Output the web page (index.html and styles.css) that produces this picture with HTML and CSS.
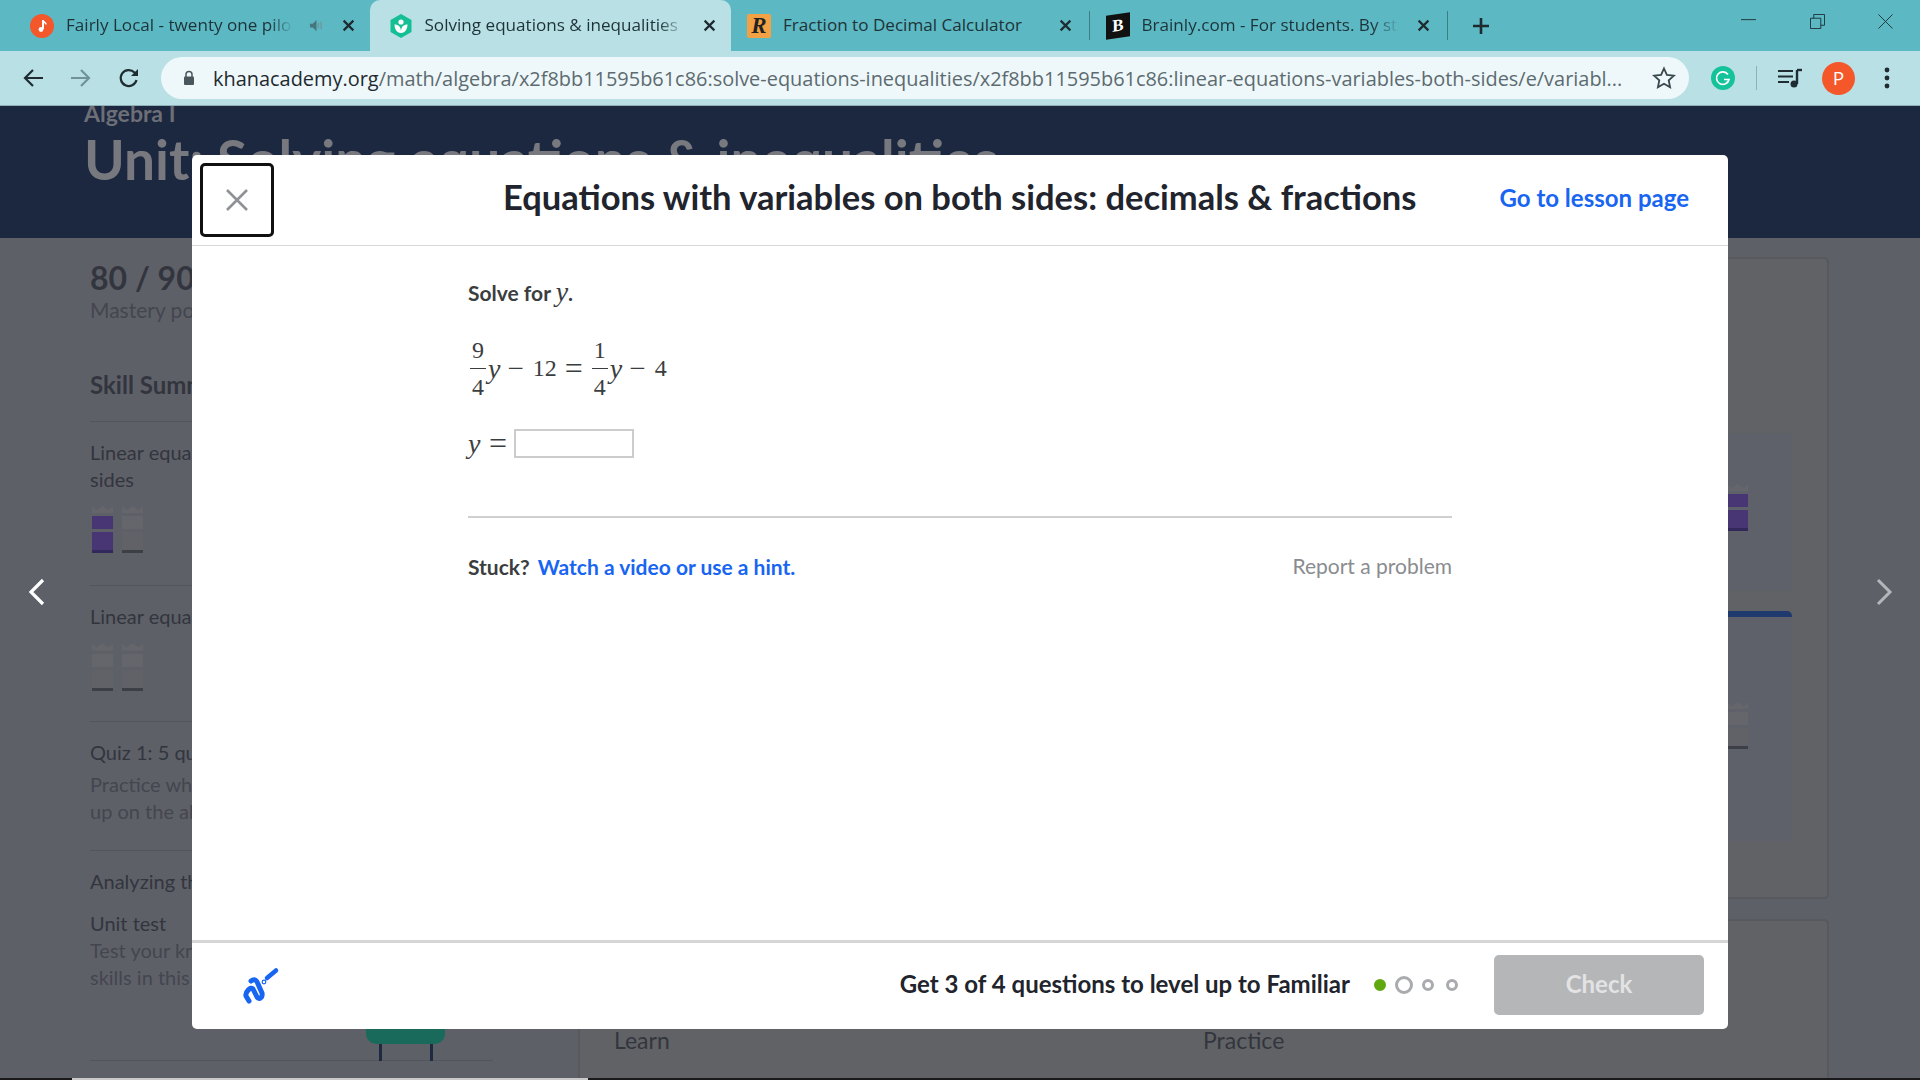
FILE: index.html
```html
<!DOCTYPE html>
<html lang="en">
<head>
    <meta charset="UTF-8">
    <title>Solving equations &amp; inequalities</title>
    <link rel="stylesheet" href="styles.css">
</head>
<body>
    <!-- browser tabs -->
    <div class="tabstrip">
        <div class="tab">
            <svg class="favicon" viewBox="0 0 24 24"><circle cx="12" cy="12" r="12" fill="#f4572a"/><path d="M13 6v9" stroke="#fff" stroke-width="2"/><path d="M13 6.5c1 2 3 2 3 4" stroke="#fff" stroke-width="1.6" fill="none"/><circle cx="11" cy="15.5" r="2.4" fill="#fff"/></svg>
            <span class="tab-title">Fairly Local - twenty one pilots</span>
            <svg class="speaker" viewBox="0 0 16 16"><path d="M1 6h3l4-4v12l-4-4H1z" fill="#48767d"/><path d="M10 5v6M13 4v8" stroke="#6b9aa1" stroke-width="1.6"/></svg>
            <svg class="tab-x" viewBox="0 0 12 12"><path d="M1.5 1.5l9 9M10.5 1.5l-9 9" stroke="#1e2a30" stroke-width="2"/></svg>
        </div>
        <div class="tab tab-active">
            <svg class="favicon" viewBox="0 0 24 24"><path d="M12 0l10.5 6v12L12 24 1.500 18V6z" fill="#14bf96"/><circle cx="12" cy="8" r="2.600" fill="#fff"/><path d="M5.500 10.500c4 0 6.500 2.500 6.500 7 0-4.500 2.500-7 6.500-7 0 5-3 8.500-6.500 8.500s-6.500-3.500-6.500-8.500z" fill="#fff"/></svg>
            <span class="tab-title">Solving equations &amp; inequalities</span>
            <svg class="tab-x" viewBox="0 0 12 12"><path d="M1.5 1.5l9 9M10.5 1.5l-9 9" stroke="#1e2a30" stroke-width="2"/></svg>
        </div>
        <div class="tab tab-sep">
            <span class="favicon favicon-r">R</span>
            <span class="tab-title tab-title-full">Fraction to Decimal Calculator</span>
            <svg class="tab-x" viewBox="0 0 12 12"><path d="M1.5 1.5l9 9M10.5 1.5l-9 9" stroke="#1e2a30" stroke-width="2"/></svg>
        </div>
        <div class="tab tab-sep">
            <span class="favicon favicon-b">B</span>
            <span class="tab-title">Brainly.com - For students. By stu</span>
            <svg class="tab-x" viewBox="0 0 12 12"><path d="M1.5 1.5l9 9M10.5 1.5l-9 9" stroke="#1e2a30" stroke-width="2"/></svg>
        </div>
        <svg class="new-tab" viewBox="0 0 18 18"><path d="M9 1v16M1 9h16" stroke="#1e2a30" stroke-width="2.600"/></svg>
        <div class="window-btns">
            <svg viewBox="0 0 16 16"><path d="M0 6h16" stroke="#1e3338" stroke-width="1"/></svg>
            <svg viewBox="0 0 16 16"><path d="M.5 4.500h11v11H.5zM4 4.500V.5h11.500V12h-4" fill="none" stroke="#1e3338" stroke-width="1"/></svg>
            <svg viewBox="0 0 16 16"><path d="M.5.5l15 15M15.500.5l-15 15" stroke="#1e3338" stroke-width="1"/></svg>
        </div>
    </div>

    <!-- address bar -->
    <div class="toolbar">
        <svg class="nav-icon" viewBox="0 0 22 22"><path d="M21 11H3M11 3l-8 8 8 8" fill="none" stroke="#1f2d33" stroke-width="2.200"/></svg>
        <svg class="nav-icon" viewBox="0 0 22 22"><path d="M1 11h18M11 3l8 8-8 8" fill="none" stroke="#71929a" stroke-width="2.200"/></svg>
        <svg class="nav-icon" viewBox="0 0 22 22"><path d="M18.500 13a8 8 0 1 1-2-7.500L19 8" fill="none" stroke="#1f2d33" stroke-width="2.200"/><path d="M20 2v7h-7z" fill="#1f2d33"/></svg>
        <div class="omnibox">
            <svg class="lock" viewBox="0 0 12 16"><path d="M3 7V4.500a3 3 0 0 1 6 0V7" fill="none" stroke="#49575c" stroke-width="1.500"/><rect x="1" y="6.500" width="10" height="8.500" rx="1" fill="#49575c"/></svg>
            <span class="url"><b>khanacademy.org</b>/math/algebra/x2f8bb11595b61c86:solve-equations-inequalities/x2f8bb11595b61c86:linear-equations-variables-both-sides/e/variabl...</span>
            <svg class="star" viewBox="0 0 24 24"><path d="M12 2.500l2.900 6.400 7 .8-5.200 4.700 1.400 6.900-6.100-3.500-6.100 3.500 1.400-6.900-5.200-4.700 7-.8z" fill="none" stroke="#37474d" stroke-width="1.800"/></svg>
        </div>
        <svg class="grammarly" viewBox="0 0 24 24"><circle cx="12" cy="12" r="12" fill="#15c39a"/><path d="M17 8.500a6.300 6.300 0 1 0 1 5h-5" fill="none" stroke="#fff" stroke-width="1.700"/></svg>
        <span class="toolbar-sep"></span>
        <svg class="media" viewBox="0 0 24 20"><path d="M0 3h15M0 8.500h15M0 14h11" stroke="#1f2d33" stroke-width="2"/><path d="M19 2v14" stroke="#1f2d33" stroke-width="2.400"/><path d="M19 2h5" stroke="#1f2d33" stroke-width="2.400"/><circle cx="16" cy="16" r="3.500" fill="#1f2d33"/></svg>
        <span class="avatar">P</span>
        <svg class="menu" viewBox="0 0 6 22"><circle cx="3" cy="3" r="2.400" fill="#1f2d33"/><circle cx="3" cy="11" r="2.400" fill="#1f2d33"/><circle cx="3" cy="19" r="2.400" fill="#1f2d33"/></svg>
    </div>

    <div class="page">
        <!-- dimmed course page behind the dialog -->
        <header class="hero">
            <p class="hero-course">Algebra I</p>
            <h1 class="hero-unit">Unit: Solving equations &amp; inequalities</h1>
        </header>
        <div class="course">
            <aside class="sidebar">
                <p class="points">80 / 900</p>
                <p class="points-label">Mastery points</p>
                <h2 class="summary-title">Skill Summary</h2>
                <div class="skill skill-first">
                    <p>Linear equations with variables on both sides</p>
                    <div class="towers">
                        <div class="tower tower-done"><i class="crown"></i><i class="block"></i><i class="block block-base"></i></div>
                        <div class="tower"><i class="crown"></i><i class="block"></i><i class="block block-base"></i></div>
                    </div>
                </div>
                <div class="skill">
                    <p>Linear equations with parentheses</p>
                    <div class="towers">
                        <div class="tower"><i class="crown"></i><i class="block"></i><i class="block block-base"></i></div>
                        <div class="tower"><i class="crown"></i><i class="block"></i><i class="block block-base"></i></div>
                    </div>
                </div>
                <div class="skill skill-quiz">
                    <p>Quiz 1: 5 questions</p>
                    <p class="muted">Practice what you've learned, and level up on the above skills</p>
                </div>
                <div class="skill skill-clip">
                    <p>Analyzing the number of solutions</p>
                </div>
                <div class="skill-test">
                    <p>Unit test</p>
                    <p class="muted">Test your knowledge of all skills in this unit</p>
                    <div class="chair"><i class="chair-seat"></i><i class="chair-legs"></i></div>
                </div>
            </aside>
            <main class="lessons">
                <section class="card card-main">
                    <div class="panel panel-one">
                        <div class="tower tower-done"><i class="crown"></i><i class="block"></i><i class="block block-base"></i></div>
                    </div>
                    <div class="panel panel-two">
                        <div class="tower"><i class="crown"></i><i class="block"></i><i class="block block-base"></i></div>
                    </div>
                </section>
                <section class="card card-next">
                    <span>Learn</span>
                    <span>Practice</span>
                </section>
            </main>
        </div>
        <svg class="pager pager-prev" viewBox="0 0 18 28"><path d="M15 2L3 14l12 12" fill="none" stroke="#fff" stroke-width="3.200"/></svg>
        <svg class="pager pager-next" viewBox="0 0 18 28"><path d="M3 2l12 12L3 26" fill="none" stroke="#b5b6ba" stroke-width="3"/></svg>

        <!-- exercise dialog -->
        <div class="modal">
            <div class="modal-head">
                <button class="close-btn"><svg viewBox="0 0 24 24"><path d="M2 2l20 20M22 2L2 22" stroke="#8f9196" stroke-width="2.600"/></svg></button>
                <h2 class="modal-title">Equations with variables on both sides: decimals &amp; fractions</h2>
                <a class="lesson-link">Go to lesson page</a>
            </div>
            <div class="modal-body">
                <div class="exercise">
                    <p class="prompt">Solve for <i class="var">y</i>.</p>
                    <div class="equation">
                        <span class="frac"><span>9</span><span class="frac-den">4</span></span>
                        <i class="var">y</i><span class="op op-minus">&minus;</span><span>12</span><span class="op op-eq">=</span>
                        <span class="frac"><span>1</span><span class="frac-den">4</span></span>
                        <i class="var">y</i><span class="op op-minus">&minus;</span><span>4</span>
                    </div>
                    <div class="answer">
                        <i class="var">y</i><span class="op">=</span><input class="answer-box" type="text">
                    </div>
                    <div class="help">
                        <p>Stuck? <a>Watch a video or use a hint.</a></p>
                        <a class="report">Report a problem</a>
                    </div>
                </div>
            </div>
            <div class="modal-foot">
                <svg class="scratch" viewBox="0 0 40 40"><path d="M9 16c4-3 6 0 7 3l4 9c1 5-3 7-5 4l-4-8c-2-3-8 3-7 7l3 5" fill="none" stroke="#1865f2" stroke-width="5" stroke-linecap="round" stroke-linejoin="round"/><path d="M25 13l9-7.500" stroke="#1865f2" stroke-width="4.500" stroke-linecap="round"/><circle cx="22" cy="17" r="1.800" fill="#fff" stroke="#1865f2" stroke-width="1.200"/></svg>
                <p class="level-text">Get 3 of 4 questions to level up to Familiar</p>
                <div class="dots">
                    <i class="dot dot-correct"></i>
                    <i class="dot dot-current"></i>
                    <i class="dot"></i>
                    <i class="dot"></i>
                </div>
                <button class="check-btn">Check</button>
            </div>
        </div>
    </div>

    <div class="taskbar"><i class="taskbar-lit"></i></div>
</body>
</html>
```

FILE: styles.css
```css
:root{
    --tab-bg: #5cb8c3;
    --toolbar-bg: #b8e0e5;
    --omni-bg: #eef8fa;
    --dim-bg: #5e6068;
    --dim-text: #33353e;
    --dim-muted: #44464f;
    --dim-line: #53555d;
    --blue: #1865f2;
}

*{
    box-sizing: border-box;
}

body{
    margin: 0;
    height: 100vh;
    overflow: hidden;
    display: flex;
    flex-direction: column;
    font-family: Lato, "Open Sans", sans-serif;
}

p, h1, h2{
    margin: 0;
}

/* tabs */
.tabstrip{
    height: 51px;
    flex: none;
    background-color: var(--tab-bg);
    display: flex;
    padding-left: 11px;
    font-family: "Open Sans", sans-serif;
    font-size: 17.1px;
    color: #1e3338;
}

.tab{
    width: 358.5px;
    height: 51px;
    flex: none;
    display: flex;
    align-items: center;
    padding-left: 19px;
    padding-right: 15px;
    position: relative;
}

.tab-active{
    background-color: var(--toolbar-bg);
    border-radius: 10px 10px 0 0;
    width: 361.5px;
    margin-right: -3px;
}

.tab-active + .tab{
    z-index: 1;
}

.tab-sep::after{
    content: "";
    position: absolute;
    right: -3px;
    top: 11px;
    height: 29px;
    width: 1px;
    background-color: #3d7d86;
}

.favicon{
    width: 24px;
    height: 24px;
    flex: none;
    margin-right: 12px;
}

.favicon-r{
    background-color: #f2a144;
    border-radius: 2px;
    font: italic bold 23px/24px "Liberation Serif", serif;
    text-align: center;
    color: #222;
}

.favicon-b{
    background-color: #111;
    transform: skewY(-8deg);
    font: bold 17px/24px "Liberation Serif", serif;
    text-align: center;
    color: #fff;
}

.tab-title{
    flex: 1;
    min-width: 0;
    margin-top: -3px;
    white-space: nowrap;
    overflow: hidden;
    -webkit-mask-image: linear-gradient(to right, #000 90%, transparent 100%);
    mask-image: linear-gradient(to right, #000 90%, transparent 100%);
}

.tab-title-full{
    -webkit-mask-image: none;
    mask-image: none;
}

.speaker{
    width: 15px;
    height: 15px;
    flex: none;
    margin-left: 16px;
}

.tab-x{
    width: 13px;
    height: 13px;
    flex: none;
    margin-left: 18px;
}

.new-tab{
    width: 18px;
    height: 18px;
    flex: none;
    align-self: center;
    margin-left: 27px;
}

.window-btns{
    margin-left: auto;
    display: flex;
    gap: 53.5px;
    padding: 14px 27px 0 0;
}

.window-btns svg{
    width: 15px;
    height: 15px;
}

/* address bar */
.toolbar{
    height: 55px;
    flex: none;
    background-color: var(--toolbar-bg);
    border-bottom: 1px solid #8fb0b6;
    display: flex;
    align-items: center;
    padding-left: 22px;
}

.nav-icon{
    width: 22px;
    height: 22px;
    flex: none;
    margin-right: 26px;
}

.nav-icon:nth-child(3){
    margin-right: 21px;
}

.omnibox{
    width: 1528px;
    height: 42px;
    flex: none;
    margin-top: -1px;
    background-color: var(--omni-bg);
    border-radius: 21px;
    display: flex;
    align-items: center;
    padding-left: 22px;
    font-family: "Open Sans", sans-serif;
    font-size: 19.93px;
    color: #5d6b70;
}

.lock{
    width: 12px;
    height: 16px;
    flex: none;
    margin-right: 18px;
}

.url{
    flex: 1;
    min-width: 0;
    margin-top: 1px;
    white-space: nowrap;
    overflow: hidden;
}

.url b{
    font-weight: 400;
    color: #1e2a30;
}

.star{
    width: 24px;
    height: 24px;
    flex: none;
    margin: 0 13px 0 20px;
}

.grammarly{
    width: 24px;
    height: 24px;
    flex: none;
    margin-left: 22px;
}

.toolbar-sep{
    width: 1px;
    height: 24px;
    flex: none;
    margin-left: 21px;
    background-color: #8fb0b6;
}

.media{
    width: 24px;
    height: 20px;
    flex: none;
    margin-left: 21px;
}

.avatar{
    width: 33px;
    height: 33px;
    flex: none;
    margin-left: 20px;
    border-radius: 50%;
    background-color: #f4572a;
    color: #fff;
    font: 19px/33px "Open Sans", sans-serif;
    text-align: center;
}

.menu{
    width: 6px;
    height: 22px;
    flex: none;
    margin-left: 29px;
}

/* dimmed page */
.page{
    flex: 1;
    min-height: 0;
    position: relative;
    overflow: hidden;
    background-color: var(--dim-bg);
}

.hero{
    height: 132px;
    background-color: #1c2740;
    padding-left: 84px;
    overflow: hidden;
}

.hero-course{
    margin-top: -6px;
    font-size: 23px;
    line-height: 26px;
    font-weight: 700;
    color: #6d6f76;
}

.hero-unit{
    font-size: 55px;
    line-height: 66px;
    font-weight: 700;
    color: #77797f;
    white-space: nowrap;
}

.course{
    display: flex;
    padding-left: 90px;
}

.sidebar{
    width: 403px;
    flex: none;
    padding-top: 21px;
    font-size: 20px;
    line-height: 27px;
    color: var(--dim-text);
}

.points{
    font-size: 32px;
    line-height: 37px;
    font-weight: 700;
}

.points-label{
    color: var(--dim-muted);
    font-size: 21px;
    line-height: 27px;
}

.summary-title{
    margin-top: 46px;
    font-size: 24px;
    line-height: 32px;
    font-weight: 700;
}

.skill{
    border-top: 1px solid var(--dim-line);
    margin-top: 32px;
    padding-top: 17px;
}

.skill p{
    width: 360px;
}

.skill-first{
    margin-top: 19.5px;
}

.towers{
    display: flex;
    gap: 9px;
    margin-top: 13.5px;
    margin-left: 2px;
}

.tower{
    width: 21px;
    display: flex;
    flex-direction: column;
    gap: 3px;
}

.tower i{
    display: block;
}

.crown{
    height: 7px;
    background-color: #64666b;
    clip-path: polygon(0 0, 20% 60%, 50% 0, 80% 60%, 100% 0, 100% 100%, 0 100%);
}

.block{
    height: 13px;
    background-color: #64666b;
}

.block-base{
    height: 21px;
    background-color: #606268;
    border-bottom: 3px solid #3d3f47;
}

.tower-done .block{
    background-color: #473673;
}

.tower-done .block-base{
    border-bottom-color: #33285c;
}

.skill-quiz{
    margin-top: 30px;
}

.skill-quiz .muted{
    margin-top: 5.5px;
}

.muted{
    color: var(--dim-muted);
}

.skill-clip{
    height: 43px;
    overflow: hidden;
    margin-top: 25px;
    margin-bottom: 17px;
}

.skill-test{
    border-bottom: 1px solid var(--dim-line);
}

.skill-test .muted{
    width: 250px;
}

.chair{
    margin-top: 19.5px;
    margin-bottom: -1px;
    margin-left: 276px;
}

.chair-seat{
    display: block;
    width: 79px;
    height: 33px;
    background-color: #196a5b;
    border-radius: 0 0 10px 10px;
}

.chair-legs{
    display: block;
    width: 54px;
    height: 17px;
    margin-left: 13px;
    border-left: 3px solid #1f2a40;
    border-right: 3px solid #1f2a40;
}

.lessons{
    flex: 1;
    min-width: 0;
    padding: 19px 91px 0 85px;
}

.card{
    border: 2px solid #58595f;
    border-radius: 5px;
    background-color: #616266;
}

.card-main{
    height: 642px;
    padding: 174px 35px 0;
}

.panel{
    background-color: #5e6169;
    display: flex;
    justify-content: flex-end;
    padding-right: 44px;
}

.panel-one{
    height: 158px;
    padding-top: 51px;
}

.panel-two{
    height: 230px;
    margin-top: 20px;
    border-top: 6px solid #1f3a6e;
    border-radius: 5px 5px 0 0;
    padding-top: 85px;
}

.card-next{
    height: 170px;
    margin-top: 20px;
    padding: 105px 0 0 34px;
    display: flex;
    font-size: 23px;
    color: var(--dim-text);
}

.card-next span{
    width: 589px;
}

.pager{
    position: absolute;
    top: 472px;
    width: 18px;
    height: 28px;
}

.pager-prev{
    left: 28px;
}

.pager-next{
    left: 1875px;
}

/* exercise dialog */
.modal{
    position: absolute;
    left: 192px;
    top: 49px;
    width: 1536px;
    height: 874px;
    background-color: #fff;
    border-radius: 5px;
    display: flex;
    flex-direction: column;
}

.modal-head{
    height: 91px;
    flex: none;
    border-bottom: 1px solid #d6d8da;
    display: flex;
    align-items: center;
    position: relative;
    padding: 0 39px 0 8px;
}

.close-btn{
    width: 74px;
    height: 74px;
    padding: 0;
    background: #fff;
    border: 3px solid #111;
    border-radius: 5px;
    display: flex;
    align-items: center;
    justify-content: center;
}

.close-btn svg{
    width: 24px;
    height: 24px;
}

.modal-title{
    flex: 1;
    margin-left: 229px;
    margin-bottom: 7px;
    font-size: 34.5px;
    font-weight: 700;
    color: #21242c;
    white-space: nowrap;
}

.lesson-link{
    margin-bottom: 6px;
    font-size: 24px;
    font-weight: 700;
    color: var(--blue);
}

.modal-body{
    flex: 1;
    padding: 0 276px;
}

.exercise{
    padding-top: 33px;
    font-size: 21px;
    color: #3b3e40;
}

.prompt{
    font-weight: 700;
    line-height: 26px;
}

.var{
    font-family: "Liberation Serif", serif;
    font-size: 28px;
    font-weight: 400;
    font-style: italic;
}

.equation{
    margin-top: 26.5px;
    display: flex;
    align-items: center;
    height: 72px;
    font-family: "Liberation Serif", serif;
    font-size: 24px;
}

.equation .var{
    letter-spacing: 8px;
}

.frac{
    display: inline-flex;
    flex-direction: column;
    align-items: center;
    width: 20px;
    line-height: 36px;
}

.frac-den{
    border-top: 1px solid #3b3e40;
    width: 16px;
    text-align: center;
}

.op{
    font-size: 29px;
}

.op-minus{
    margin: 0 9px 0 -1px;
}

.op-eq{
    font-size: 32px;
    margin: 0 7px 0 8px;
}

.answer{
    margin-top: 24.5px;
    display: flex;
    align-items: center;
    height: 29px;
    font-family: "Liberation Serif", serif;
    font-size: 24px;
}

.answer .op{
    font-size: 32px;
    margin: 0 7.5px 0 8.5px;
}

.answer-box{
    width: 120px;
    height: 29px;
    padding: 0;
    border: 2px solid #ccc;
    background-color: #fff;
}

.help{
    margin-top: 57.5px;
    padding-top: 36px;
    border-top: 2px solid #d0d0d0;
    display: flex;
    justify-content: space-between;
    font-weight: 700;
}

.help a{
    color: var(--blue);
    margin-left: 3px;
}

.help .report{
    color: #8a8c90;
    font-weight: 400;
    margin-top: -1px;
}

.modal-foot{
    height: 89px;
    flex: none;
    border-top: 3px solid #d6d6d6;
    display: flex;
    align-items: center;
    padding: 0 24px 2px 50px;
}

.scratch{
    width: 40px;
    height: 40px;
    flex: none;
}

.level-text{
    margin-left: auto;
    margin-bottom: 3px;
    font-size: 24px;
    font-weight: 700;
    color: #21242c;
}

.dots{
    display: flex;
    align-items: center;
    gap: 12px;
    margin: 0 36px 0 24px;
}

.dot{
    display: block;
    width: 12px;
    height: 12px;
    border: 3px solid #a9abae;
    border-radius: 50%;
}

.dot-correct{
    background-color: #5fa80e;
    border-color: #5fa80e;
}

.dot-current{
    width: 18px;
    height: 18px;
    margin: 0 -3px;
}

.check-btn{
    width: 210px;
    height: 60px;
    padding: 0 0 4px;
    border: none;
    border-radius: 5px;
    background-color: #b5b6b8;
    color: #e3e3e4;
    font-family: Lato, sans-serif;
    font-size: 24px;
    font-weight: 700;
}

.taskbar{
    height: 2px;
    flex: none;
    background-color: #1a1a1c;
    padding-left: 72px;
}

.taskbar-lit{
    display: block;
    width: 516px;
    height: 2px;
    background-color: #c9c9c9;
}
```
